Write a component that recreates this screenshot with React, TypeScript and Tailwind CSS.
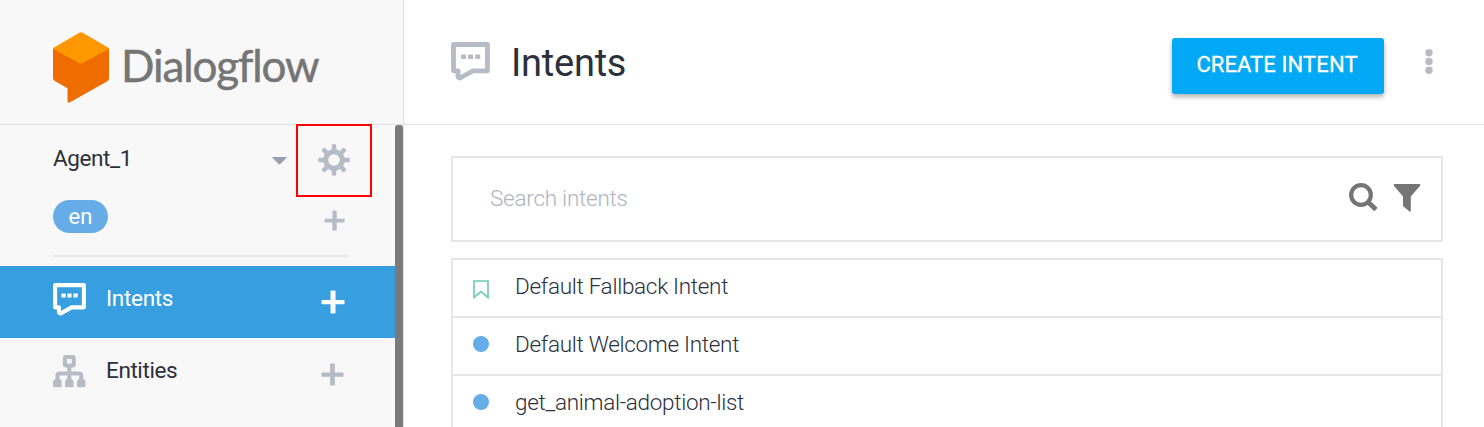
import React from "react";

const PlusIcon = ({ size, className }: { size: number; className: string }) => (
  <svg width={size} height={size} viewBox="0 0 24 24" className={className}>
    <path
      d="M10.3 .5h3.4q.8 0 .8.8v8.6h8.2q.8 0 .8.8v2.8q0 .8-.8.8h-8.2v8.4q0 .8-.8.8h-3.4q-.8 0-.8-.8v-8.4H1.3q-.8 0-.8-.8v-2.8q0-.8.8-.8h8.2V1.3q0-.8.8-.8z"
      fill="currentColor"
    />
  </svg>
);

const ChatIcon = ({ size, className }: { size: number; className: string }) => (
  <svg width={size} height={size} viewBox="0 0 39 39" className={className}>
    <path
      d="M2.5 2.5H36.5V28.8H22L9 36L7 35V28.8H2.5Z"
      fill="none"
      stroke="currentColor"
      strokeWidth="4.8"
      strokeLinejoin="round"
    />
    <path d="M10 12.4h5v4.7h-5zM17 12.4h5v4.7h-5zM24.2 12.4h5v4.7h-5z" fill="currentColor" />
  </svg>
);

const GearIcon = () => (
  <svg width="32" height="32" viewBox="-16 -16 32 32" className="text-[#b6bbc6]">
    <circle r="8.2" fill="none" stroke="currentColor" strokeWidth="4.8" />
    {[0, 45, 90, 135, 180, 225, 270, 315].map((a) => (
      <path
        key={a}
        d="M-3.6 -9.6L-2.2 -11.4V-14.6Q-2.1 -15.7 -1 -15.8H1Q2.1 -15.7 2.2 -14.6V-11.4L3.6 -9.6Z"
        transform={`rotate(${a})`}
        fill="currentColor"
      />
    ))}
  </svg>
);

const EntitiesIcon = () => (
  <svg width="33" height="33" viewBox="0 0 33 33" className="text-[#b6bbc6]">
    <rect x="11.9" y="2" width="8.8" height="8.4" rx="1" fill="none" stroke="currentColor" strokeWidth="4" />
    <path d="M16.3 12v15M4.5 27v-6.5q0-2.1 2.1-2.1h19.5q2.1 0 2.1 2.1V27" fill="none" stroke="currentColor" strokeWidth="4" />
    <path
      d="M2 24h5l1.6 2.2V31q0 1.3-1.3 1.3H1.3Q0 32.3 0 31v-4.8zM13.8 24h5l1.7 2.2V31q0 1.3-1.3 1.3h-5.8q-1.3 0-1.3-1.3v-4.8zM25.8 24h5l1.7 2.2V31q0 1.3-1.3 1.3h-5.9q-1.3 0-1.3-1.3v-4.8z"
      fill="currentColor"
    />
  </svg>
);

const Logo = () => (
  <svg width="56" height="71" viewBox="0 0 56 71">
    <path d="M0 17Q0 16 1 16H55Q56 16 56 17V46.5Q56 48.3 54.4 49.2L17 70.3Q14.5 71.5 14.5 69V56.2L1.5 48.7Q0 47.8 0 46Z" fill="#ef6c00" />
    <path d="M1 15.6L26.2 .7Q28 -.3 29.8 .7L55 15.6Q56.6 16.6 55 17.5L29.5 31.3Q28 32.1 26.5 31.3L1 17.5Q-.6 16.6 1 15.6Z" fill="#ff9800" />
  </svg>
);

const intents = [
  { name: "Default Fallback Intent", fallback: true },
  { name: "Default Welcome Intent", fallback: false },
  { name: "get_animal-adoption-list", fallback: false },
];

const Sidebar = () => (
  <aside className="flex w-[404px] shrink-0 flex-col border-r border-[#e2e2e2] bg-[#f8f8f8]">
    <div className="flex h-[125px] shrink-0 items-start border-b border-[#e2e2e2] pl-[53px] pt-[32px]">
      <Logo />
      <span className="ml-[12px] mt-[6px] font-[Lato,sans-serif] text-[44px] leading-[54px] tracking-[-1.1px] text-[#757575] [-webkit-text-stroke:0.5px_#757575]">
        Dialogflow
      </span>
    </div>
    <div className="flex min-h-0 flex-1">
      <div className="flex min-w-0 flex-1 flex-col">
        <div className="flex h-[72px] shrink-0 items-start pl-[53px]">
          <span className="w-[219px] pt-[17px] text-[22.5px] leading-[32px] tracking-[-0.4px]">Agent_1</span>
          <svg width="15" height="8" viewBox="0 0 15 8" className="mt-[32px]">
            <path d="M.6 0h13.8q.8 0 .2.7L8.4 7q-.9.8-1.8 0L.4.7Q-.2 0 .6 0z" fill="#98a0af" />
          </svg>
          <div className="-mt-px ml-[9px] flex h-[73px] w-[76px] items-start justify-center border-2 border-[#ff0000] pt-[18px]">
            <GearIcon />
          </div>
        </div>
        <div className="ml-[53px] mr-[47px] flex h-[60px] shrink-0 items-start justify-between border-b-2 border-[#e8e8e8]">
          <span className="mt-[3px] flex h-[33px] w-[55px] items-center justify-center rounded-full bg-[#66ade8] text-[22px] leading-none text-white">
            en
          </span>
          <PlusIcon size={21} className="mr-[3px] mt-[13px] text-[#b6bbc6]" />
        </div>
        <div className="mt-[9px] flex h-[72px] shrink-0 items-center bg-[#379ee0] pl-[53px] text-white">
          <ChatIcon size={33} className="-mt-[6px]" />
          <span className="-mt-[8px] ml-[20px] flex-1 text-[22.5px] leading-[32px] tracking-[-0.3px]">Intents</span>
          <PlusIcon size={24} className="mr-[50px]" />
        </div>
        <div className="flex h-[72px] shrink-0 items-center pl-[53px]">
          <div className="-mt-[6px]">
            <EntitiesIcon />
          </div>
          <span className="-mt-[8px] ml-[20px] flex-1 text-[22.5px] leading-[32px] tracking-[-0.4px]">Entities</span>
          <PlusIcon size={23} className="mr-[51px] text-[#b6bbc6]" />
        </div>
      </div>
      <div className="w-[8px] shrink-0 rounded-t-[3px] bg-[#7b7b7b]" />
    </div>
  </aside>
);

export default function App() {
  return (
    <div className="flex h-[427px] w-[1484px] overflow-hidden bg-white font-[Roboto,sans-serif] text-[#2b303b]">
      <Sidebar />
      <main className="flex min-w-0 flex-1 flex-col">
        <header className="flex h-[125px] shrink-0 items-start border-b border-[#e2e2e2] pl-[47px]">
          <ChatIcon size={39} className="mt-[42px] text-[#b6bbc6]" />
          <h1 className="ml-[21px] mt-[39px] flex-1 text-[38px] leading-[48px] tracking-[-0.25px]">Intents</h1>
          <button className="mt-[38px] h-[56px] w-[212px] rounded-[3px] bg-[#03a9f4] pb-[4px] pr-[2px] text-[22px] tracking-[0.1px] text-white shadow-[0_3px_5px_rgba(0,0,0,0.3)] [-webkit-text-stroke:0.3px_white]">
            CREATE INTENT
          </button>
          <svg width="8" height="26" viewBox="0 0 8 26" className="ml-[41px] mr-[51px] mt-[49px] fill-[#b6bbc6]">
            <circle cx="4" cy="3.7" r="3.7" />
            <circle cx="4" cy="12.5" r="3.7" />
            <circle cx="4" cy="21.3" r="3.7" />
          </svg>
        </header>
        <div className="ml-[47px] mr-[41px] mt-[31px] flex h-[86px] shrink-0 items-start border-2 border-[#e5e6e7] pl-[37px]">
          <span className="flex-1 pt-[24px] text-[22.5px] font-light leading-[32px] tracking-[-0.25px] text-[#aeb4bf]">Search intents</span>
          <svg width="29" height="29" viewBox="0 0 29 29" className="mt-[25px]">
            <circle cx="12" cy="12" r="9.8" fill="none" stroke="#757575" strokeWidth="4.2" />
            <path d="M19 19l8 7.5" stroke="#757575" strokeWidth="4.8" />
          </svg>
          <svg width="28" height="28" viewBox="0 0 28 28" className="ml-[15px] mr-[20px] mt-[26px]">
            <path d="M1.3 0h25.4q1.2.7.4 1.7L17.8 12.5V27q-.2 1-1.2.5l-5.8-4.8q-.8-.7-.8-1.7v-8.5L.9 1.7Q.1.6 1.3 0z" fill="#757575" />
          </svg>
        </div>
        <div className="ml-[47px] mr-[41px] mt-[16px] flex flex-1 flex-col border-x-2 border-t-2 border-[#e5e6e7]">
          {intents.map((intent) => (
            <div key={intent.name} className="flex h-[58px] shrink-0 items-start border-b-2 border-[#e5e6e7] pl-[20px]">
              {intent.fallback ? (
                <svg width="16" height="19" viewBox="0 0 16 19" className="mt-[20px]">
                  <path d="M1 1H15V17.5L8 11.5L1 17.5Z" fill="none" stroke="#72cdb5" strokeWidth="1.7" />
                </svg>
              ) : (
                <span className="mt-[18px] size-[16px] rounded-full bg-[#66ade8]" />
              )}
              <span className="ml-[26px] pt-[10px] text-[22.5px] font-light leading-[32px] tracking-[-0.3px]">{intent.name}</span>
            </div>
          ))}
        </div>
      </main>
    </div>
  );
}
